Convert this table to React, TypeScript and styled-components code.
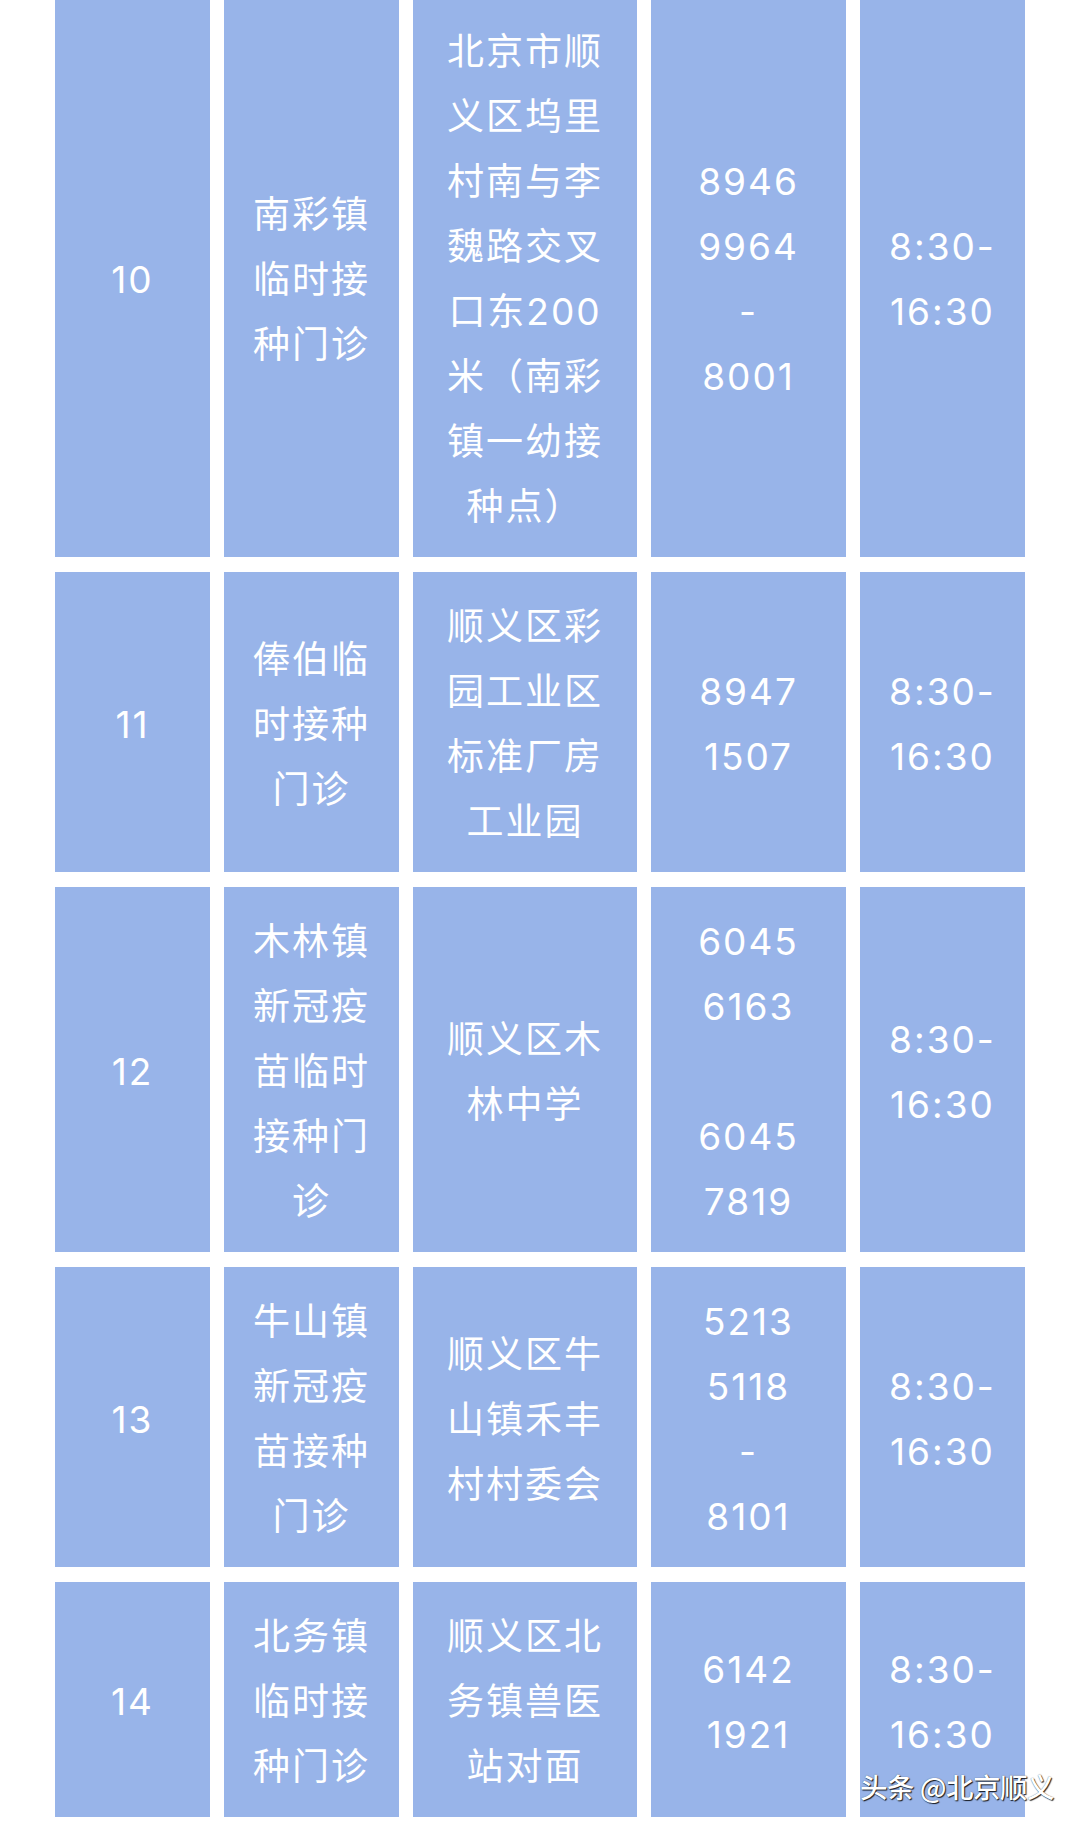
import React from "react";
import styled, { createGlobalStyle } from "styled-components";

const GlobalStyle = createGlobalStyle`
  html, body {
    margin: 0;
    padding: 0;
    background: #ffffff;
  }
  body {
    font-family: Inter, "Noto Sans CJK SC", sans-serif;
  }
`;

const Page = styled.div`
  position: relative;
  width: 1080px;
  height: 1827px;
  overflow: hidden;
  background: #ffffff;
`;

const Table = styled.div`
  display: flex;
  flex-direction: column;
  gap: 15px;
  margin: -3px 55px 0 55px;
`;

const Row = styled.div`
  display: grid;
  grid-template-columns: 155px 175px 224px 195px 165px;
  column-gap: 14px;
`;

const Cell = styled.div`
  background: #98b4e9;
  color: #ffffff;
  display: flex;
  flex-direction: column;
  align-items: center;
  justify-content: center;
  padding: 22px 0 18px;
  font-family: Inter, "Noto Sans CJK SC", sans-serif;
  font-size: 37px;
  font-weight: 400;
  letter-spacing: 2px;
  text-align: center;
`;

const Line = styled.span`
  display: block;
  height: 65px;
  line-height: 65px;
  white-space: nowrap;
`;

const Watermark = styled.div`
  position: absolute;
  right: 26px;
  bottom: 27px;
  font-family: "Noto Sans CJK SC", sans-serif;
  font-size: 27.5px;
  font-weight: 500;
  line-height: 1;
  color: #ffffff;
  letter-spacing: -0.5px;
  text-shadow: 1px 1px 1px rgba(0, 0, 0, 0.85), 0 0 1px rgba(0, 0, 0, 0.6);
`;

type RowData = {
  no: string;
  name: string[];
  addr: string[];
  phone: string[];
  time: string[];
};

const TIME = ["8:30-", "16:30"];

const rows: RowData[] = [
  {
    no: "10",
    name: ["南彩镇", "临时接", "种门诊"],
    addr: ["北京市顺", "义区坞里", "村南与李", "魏路交叉", "口东200", "米（南彩", "镇一幼接", "种点）"],
    phone: ["8946", "9964", "-", "8001"],
    time: TIME,
  },
  {
    no: "11",
    name: ["俸伯临", "时接种", "门诊"],
    addr: ["顺义区彩", "园工业区", "标准厂房", "工业园"],
    phone: ["8947", "1507"],
    time: TIME,
  },
  {
    no: "12",
    name: ["木林镇", "新冠疫", "苗临时", "接种门", "诊"],
    addr: ["顺义区木", "林中学"],
    phone: ["6045", "6163", "", "6045", "7819"],
    time: TIME,
  },
  {
    no: "13",
    name: ["牛山镇", "新冠疫", "苗接种", "门诊"],
    addr: ["顺义区牛", "山镇禾丰", "村村委会"],
    phone: ["5213", "5118", "-", "8101"],
    time: TIME,
  },
  {
    no: "14",
    name: ["北务镇", "临时接", "种门诊"],
    addr: ["顺义区北", "务镇兽医", "站对面"],
    phone: ["6142", "1921"],
    time: TIME,
  },
];

function Lines({ items }: { items: string[] }) {
  return (
    <>
      {items.map((t, i) => (
        <Line key={i}>{t === "" ? "\u00a0" : t}</Line>
      ))}
    </>
  );
}

export default function App() {
  return (
    <>
      <GlobalStyle />
      <Page>
        <Table>
          {rows.map((r) => (
            <Row key={r.no}>
              <Cell>
                <Line>{r.no}</Line>
              </Cell>
              <Cell>
                <Lines items={r.name} />
              </Cell>
              <Cell>
                <Lines items={r.addr} />
              </Cell>
              <Cell>
                <Lines items={r.phone} />
              </Cell>
              <Cell>
                <Lines items={r.time} />
              </Cell>
            </Row>
          ))}
        </Table>
        <Watermark>头条 @北京顺义</Watermark>
      </Page>
    </>
  );
}
